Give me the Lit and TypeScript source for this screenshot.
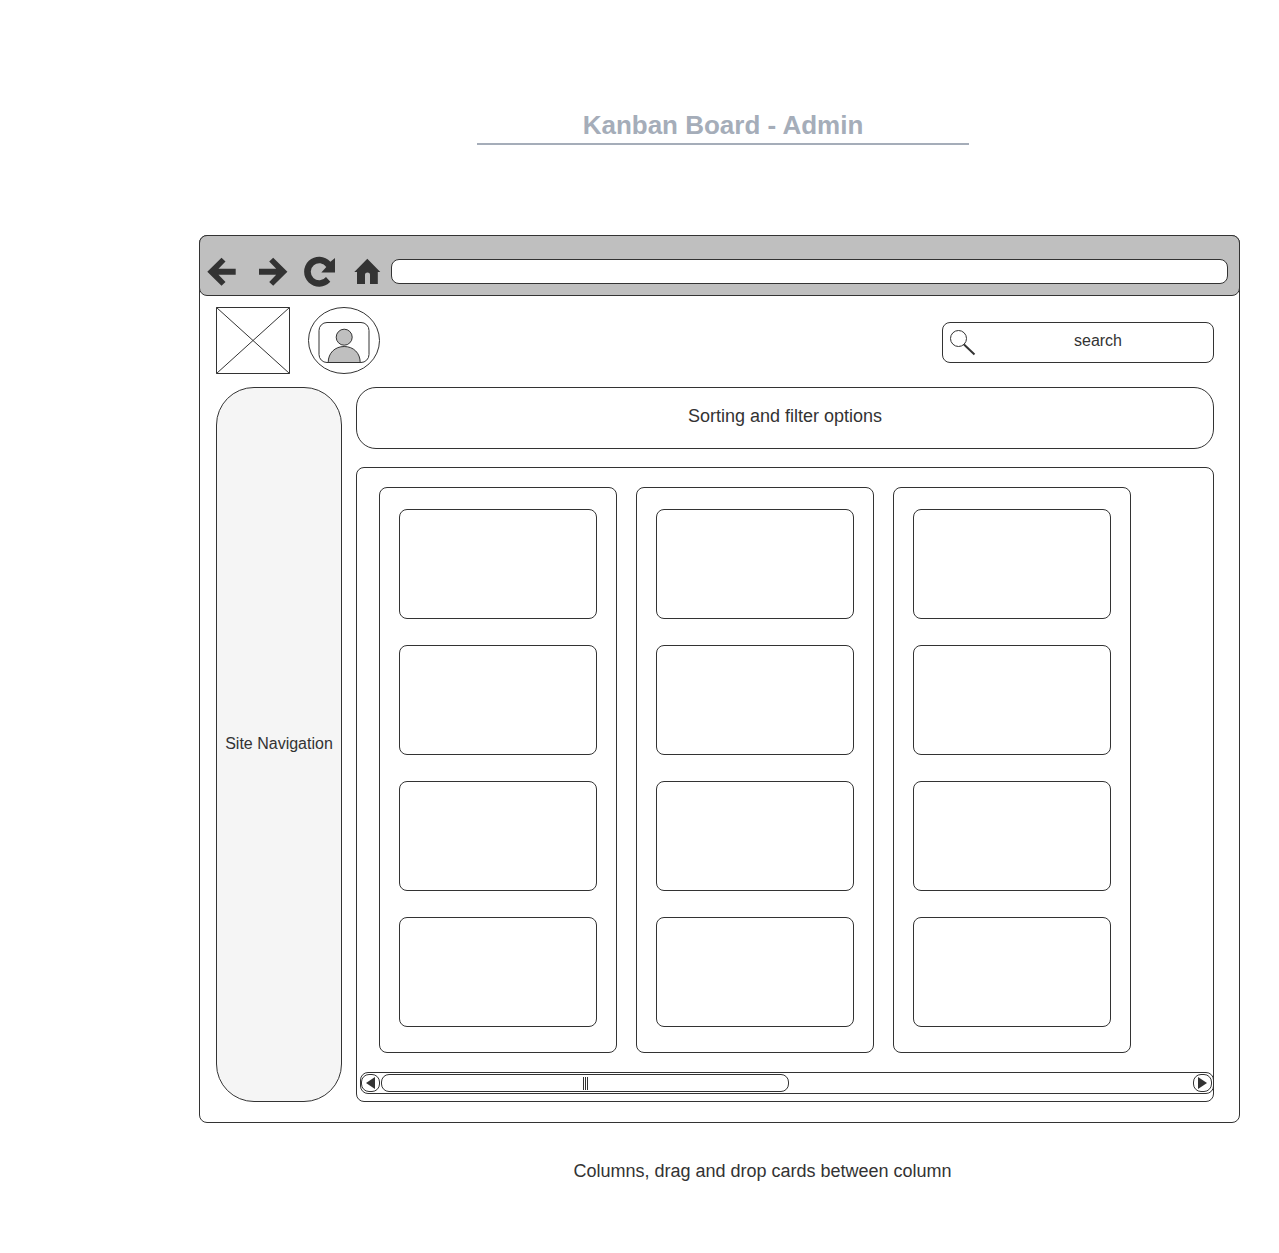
import { LitElement, html, css } from "lit";
import { customElement, property } from "lit/decorators.js";

@customElement("browser-toolbar")
export class BrowserToolbar extends LitElement {
  static styles = css`
    :host {
      display: block;
    }
    .bar {
      display: flex;
      align-items: center;
      gap: 9px;
      box-sizing: border-box;
      height: 61px;
      padding: 12px 11px 0 6px;
      background: #bfbfbf;
      border: 1px solid #333;
      border-radius: 8px;
    }
    .actions {
      display: flex;
      gap: 14px;
    }
    .history {
      display: flex;
      gap: 20px;
    }
    .action {
      display: block;
      width: 32px;
      height: 31px;
      padding: 0;
      border: 0;
      background: none;
      cursor: pointer;
    }
    .icon {
      display: block;
      fill: #333;
    }
    .address {
      flex: 1;
      min-width: 0;
      box-sizing: border-box;
      height: 25px;
      padding: 0 10px;
      border: 1px solid #333;
      border-radius: 8px;
      background: #fff;
      font: 16px "Liberation Sans", Arial, sans-serif;
      color: #333;
    }
  `;

  render() {
    return html`
      <div class="bar">
        <div class="actions">
          <div class="history">
            <button class="action" aria-label="Back">
              <svg class="icon" width="32" height="31" viewBox="0 0 32 31">
                <path d="M1.3 15.7 15.5 1.7 19.5 5.5 12.5 12.7H29.7V18.7H12.5L19.5 25.9 15.5 29.7Z" />
              </svg>
            </button>
            <button class="action" aria-label="Forward">
              <svg class="icon" width="32" height="31" viewBox="0 0 32 31">
                <path d="M29.4 15.7 15.2 1.7 11.2 5.5 18.2 12.7H1V18.7H18.2L11.2 25.9 15.2 29.7Z" />
              </svg>
            </button>
          </div>
          <button class="action" aria-label="Reload">
            <svg class="icon" width="32" height="31" viewBox="0 0 32 31">
              <path
                d="M31 2V16.4H17.3L22.3 11A8.5 8.5 0 1 0 22 21L26.3 25.7A15 15 0 1 1 26.4 5.8Z"
              />
            </svg>
          </button>
          <button class="action" aria-label="Home">
            <svg class="icon" width="32" height="31" viewBox="0 0 32 31">
              <path
                d="M17.3 2.7 30.3 15.9H27.8V28H20V18.4Q20 16.4 17.5 16.4Q15 16.4 15 18.4V28H7V15.9H4.3Z"
              />
            </svg>
          </button>
        </div>
        <input class="address" type="text" aria-label="Address" />
      </div>
    `;
  }
}

@customElement("site-header")
export class SiteHeader extends LitElement {
  static styles = css`
    :host {
      display: block;
    }
    .row {
      display: flex;
      align-items: flex-start;
      gap: 18px;
    }
    .drawing {
      display: block;
      fill: none;
      stroke: #333;
    }
    .tint {
      fill: #bfbfbf;
    }
    .search {
      display: flex;
      align-items: center;
      align-self: flex-end;
      box-sizing: border-box;
      width: 272px;
      height: 41px;
      margin: 0 0 11px auto;
      border: 1px solid #333;
      border-radius: 8px;
      background: #fff;
    }
    .glass {
      flex: none;
    }
    .field {
      flex: 1;
      min-width: 0;
      height: 36px;
      padding: 0 0 4px;
      border: 0;
      background: none;
      outline: none;
      text-align: center;
      font: 16px "Liberation Sans", Arial, sans-serif;
      color: #333;
    }
    .field::placeholder {
      color: #333;
      opacity: 1;
    }
  `;

  render() {
    return html`
      <div class="row">
        <svg class="drawing" width="74" height="67" viewBox="0 0 74 67" role="img" aria-label="Logo">
          <path d="M.5.5H73.5V66.5H.5ZM.5.5 73.5 66.5M73.5.5.5 66.5" />
        </svg>
        <svg class="drawing" width="72" height="67" viewBox="0 0 72 67" role="img" aria-label="Profile">
          <ellipse cx="36" cy="33.5" rx="35.5" ry="33" />
          <rect x="11" y="15.5" width="50" height="40" rx="8" />
          <circle class="tint" cx="36.2" cy="30.2" r="8" />
          <path class="tint" d="M20.2 55.5C20.2 46 27 39.5 36.2 39.5S52.2 46 52.2 55.5Z" />
        </svg>
        <label class="search">
          <svg class="drawing glass" width="40" height="38" viewBox="0 0 40 38">
            <circle cx="15.5" cy="14.5" r="8" />
            <path d="M21 20.5 31.5 30.5" stroke-width="2" />
          </svg>
          <input class="field" type="text" placeholder="search" aria-label="search" />
        </label>
      </div>
    `;
  }
}

@customElement("board-column")
export class BoardColumn extends LitElement {
  static styles = css`
    :host {
      display: block;
    }
    .column {
      display: grid;
      gap: 26px;
      padding: 21px 19px 25px;
      border: 1px solid #333;
      border-radius: 8px;
    }
    .card {
      box-sizing: border-box;
      height: 110px;
      border: 1px solid #333;
      border-radius: 8px;
      background: #fff;
    }
  `;

  @property({ type: Number }) cards = 4;

  render() {
    return html`
      <section class="column">
        ${Array.from({ length: this.cards }, () => html`<article class="card" draggable="true"></article>`)}
      </section>
    `;
  }
}

@customElement("board-scrollbar")
export class BoardScrollbar extends LitElement {
  static styles = css`
    :host {
      display: block;
    }
    .rail {
      display: flex;
      align-items: center;
      gap: 1px;
      box-sizing: border-box;
      height: 22px;
      padding-right: 1px;
      border: 1px solid #333;
      border-radius: 8px;
    }
    .step {
      flex: none;
      display: grid;
      place-items: center;
      box-sizing: border-box;
      width: 19px;
      height: 18px;
      padding: 0;
      border: 1px solid #333;
      border-radius: 8px;
      background: #fff;
    }
    .arrow {
      display: block;
      fill: #333;
    }
    .track {
      flex: 1;
      display: grid;
      grid-template-columns: 408px;
    }
    .thumb {
      display: flex;
      justify-content: center;
      align-items: center;
      gap: 1px;
      box-sizing: border-box;
      height: 18px;
      border: 1px solid #333;
      border-radius: 8px;
      background: #fff;
    }
    .grip {
      width: 1px;
      height: 13px;
      background: #333;
    }
  `;

  render() {
    return html`
      <div class="rail">
        <button class="step" aria-label="Scroll left">
          <svg class="arrow" width="9" height="12" viewBox="0 0 9 12"><path d="M0 6 9 0V12Z" /></svg>
        </button>
        <div class="track">
          <div class="thumb">
            <span class="grip"></span>
            <span class="grip"></span>
            <span class="grip"></span>
          </div>
        </div>
        <button class="step" aria-label="Scroll right">
          <svg class="arrow" width="9" height="12" viewBox="0 0 9 12"><path d="M9 6 0 0V12Z" /></svg>
        </button>
      </div>
    `;
  }
}

@customElement("app-root")
export class AppRoot extends LitElement {
  static styles = css`
    :host {
      display: block;
      background: #fff;
      color: #333;
      font-family: "Liberation Sans", Arial, sans-serif;
    }
    .heading {
      padding: 110px 32px 0 199px;
    }
    .title {
      box-sizing: border-box;
      max-width: 492px;
      margin: 0 auto;
      padding-bottom: 3px;
      border-bottom: 2px solid #a5adb9;
      color: #a5adb9;
      text-align: center;
      font-size: 26px;
      line-height: 30px;
      font-weight: bold;
    }
    .window {
      margin: 90px 39px 0 199px;
      border: 1px solid #333;
      border-radius: 8px;
    }
    .toolbar {
      margin: -1px -1px 0;
    }
    .page {
      padding: 11px 25px 20px 16px;
    }
    .body {
      display: grid;
      grid-template-columns: 126px minmax(0, 1fr);
      gap: 14px;
      margin-top: 13px;
    }
    .nav {
      display: flex;
      align-items: center;
      justify-content: center;
      box-sizing: border-box;
      padding-bottom: 2px;
      border: 1px solid #333;
      border-radius: 38px;
      background: #f5f5f5;
      font-size: 16px;
      line-height: 18px;
      white-space: nowrap;
    }
    .content {
      display: grid;
      gap: 18px;
    }
    .filters {
      display: flex;
      align-items: center;
      justify-content: center;
      box-sizing: border-box;
      height: 62px;
      padding-bottom: 4px;
      border: 1px solid #333;
      border-radius: 20px;
      font-size: 18px;
      line-height: 20px;
    }
    .board {
      padding: 19px 0 7px;
      border: 1px solid #333;
      border-radius: 8px;
    }
    .columns {
      display: grid;
      grid-template-columns: repeat(3, 238px);
      gap: 19px;
      padding-left: 22px;
      overflow: hidden;
    }
    .scroller {
      margin: 19px -1px 0 3px;
    }
    .caption {
      margin: 0;
      padding: 38px 0 70px 246px;
      text-align: center;
      font-size: 18px;
      line-height: 20px;
    }
  `;

  render() {
    return html`
      <header class="heading"><h1 class="title">Kanban Board - Admin</h1></header>
      <main class="window">
        <browser-toolbar class="toolbar"></browser-toolbar>
        <div class="page">
          <site-header></site-header>
          <div class="body">
            <nav class="nav">Site Navigation</nav>
            <div class="content">
              <div class="filters">Sorting and filter options</div>
              <div class="board">
                <div class="columns">
                  ${[4, 4, 4].map((n) => html`<board-column .cards=${n}></board-column>`)}
                </div>
                <board-scrollbar class="scroller"></board-scrollbar>
              </div>
            </div>
          </div>
        </div>
      </main>
      <p class="caption">Columns, drag and drop cards between column</p>
    `;
  }
}
